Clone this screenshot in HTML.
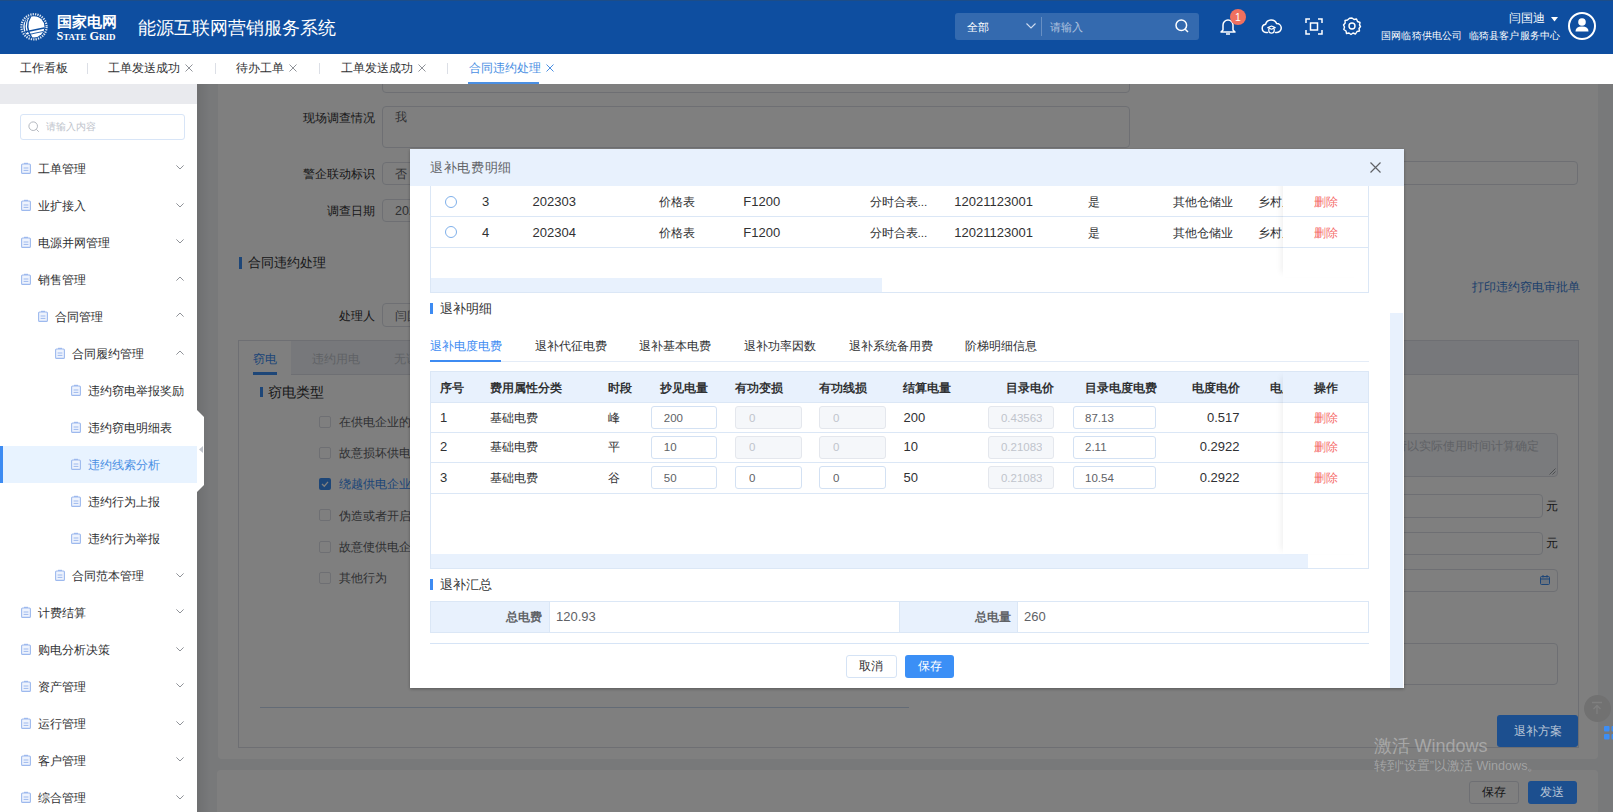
<!DOCTYPE html>
<html><head><meta charset="utf-8">
<style>
*{box-sizing:border-box;margin:0;padding:0}
html,body{width:1613px;height:812px;overflow:hidden;background:#f0f2f5;font-family:"Liberation Sans",sans-serif;color:#303133}
.a{position:absolute}
.t{position:absolute;white-space:nowrap;height:20px;line-height:20px;font-size:11.76px}
svg{position:absolute;overflow:visible}
</style></head><body>

<!-- ============ MAIN BACKGROUND (under overlay) ============ -->
<div id="main" class="a" style="left:197px;top:84px;width:1416px;height:728px;background:#f0f2f5;overflow:hidden">
<div class="a" style="left:0.0px;top:0.0px;width:13.0px;height:728.0px;background:linear-gradient(to right,rgba(0,0,0,0.08),rgba(0,0,0,0))"></div>
<div class="a" style="left:21.0px;top:-24.0px;width:1379.5px;height:698.5px;background:#fff;border-radius:4px"></div>
<div class="a" style="left:20.0px;top:685.5px;width:1380.5px;height:60.5px;background:#fff;border-radius:4px"></div>
<div class="a" style="left:185.0px;top:-24.0px;width:748.0px;height:32.5px;border:1px solid #dcdfe6;border-radius:4px;background:#fff"></div>
<div class="t" style="right:1238.2px;top:23.9px;color:#303133">现场调查情况</div>
<div class="a" style="left:185.0px;top:22.0px;width:748.0px;height:41.5px;border:1px solid #dcdfe6;border-radius:4px;background:#fff"></div>
<div class="t" style="left:198.0px;top:23.2px;color:#606266">我</div>
<div class="t" style="right:1238.2px;top:79.5px;color:#303133">警企联动标识</div>
<div class="a" style="left:185.0px;top:78.0px;width:618.0px;height:22.5px;border:1px solid #dcdfe6;border-radius:4px;background:#fff"></div>
<div class="t" style="left:198.0px;top:79.5px;color:#606266">否</div>
<div class="a" style="left:903.0px;top:77.0px;width:477.5px;height:23.5px;border:1px solid #dcdfe6;border-radius:4px;background:#fff"></div>
<div class="t" style="right:1238.2px;top:116.8px;color:#303133">调查日期</div>
<div class="a" style="left:185.0px;top:115.0px;width:618.0px;height:22.5px;border:1px solid #dcdfe6;border-radius:4px;background:#fff"></div>
<div class="t" style="left:198.0px;top:116.8px;color:#606266;font-size:12.5px">2023-03-17</div>
<div class="a" style="left:42.0px;top:173.0px;width:3.0px;height:11.5px;background:#3a8cf0"></div>
<div class="t" style="left:51.0px;top:168.8px;font-size:13.44px;color:#303133">合同违约处理</div>
<div class="t" style="right:1238.5px;top:221.6px;color:#303133">处理人</div>
<div class="a" style="left:185.0px;top:219.0px;width:618.0px;height:23.5px;border:1px solid #dcdfe6;border-radius:4px;background:#fff"></div>
<div class="t" style="left:198.0px;top:221.6px;color:#606266">闫国迪</div>
<div class="t" style="left:1274.6px;top:192.8px;color:#3a7fd8">打印违约窃电审批单</div>
<div class="a" style="left:41.0px;top:256.0px;width:1341.0px;height:407.5px;border:1px solid #dcdfe6;background:#fff"></div>
<div class="a" style="left:42.0px;top:257.0px;width:1339.0px;height:33.5px;background:#eef1f6;border-bottom:1px solid #dcdfe6"></div>
<div class="a" style="left:42.0px;top:257.0px;width:51.5px;height:34.0px;background:#fff"></div>
<div class="t" style="left:56.0px;top:264.7px;color:#3a8cf0">窃电</div>
<div class="a" style="left:56.0px;top:288.0px;width:24.0px;height:2.5px;background:#3a8cf0"></div>
<div class="t" style="left:115.0px;top:264.7px;color:#c0c4cc">违约用电</div>
<div class="t" style="left:197.3px;top:264.7px;color:#c0c4cc">无证用电</div>
<div class="a" style="left:63.0px;top:302.6px;width:3.0px;height:10.9px;background:#3a8cf0"></div>
<div class="t" style="left:71.0px;top:298.2px;font-size:14px;color:#303133">窃电类型</div>
<div class="a" style="left:121.5px;top:332.0px;width:12.0px;height:12.0px;border:1px solid #dcdfe6;border-radius:2px;background:#fff"></div>
<div class="t" style="left:141.6px;top:328.2px;color:#606266">在供电企业的供电设施上擅自接线用电</div>
<div class="a" style="left:121.5px;top:363.0px;width:12.0px;height:12.0px;border:1px solid #dcdfe6;border-radius:2px;background:#fff"></div>
<div class="t" style="left:141.6px;top:359.2px;color:#606266">故意损坏供电企业用电计量装置</div>
<div class="a" style="left:121.5px;top:394.2px;width:12.0px;height:12.0px;background:#3a8cf0;border-radius:2px"></div>
<svg style="left:123.5px;top:396.2px" width="8" height="8" viewBox="0 0 8 8"><path d="M1 4 L3.3 6.2 L7 1.8" stroke="#fff" stroke-width="1.3" fill="none"/></svg>
<div class="t" style="left:141.6px;top:390.4px;color:#3a8cf0">绕越供电企业用电计量装置用电</div>
<div class="a" style="left:121.5px;top:425.3px;width:12.0px;height:12.0px;border:1px solid #dcdfe6;border-radius:2px;background:#fff"></div>
<div class="t" style="left:141.6px;top:421.5px;color:#606266">伪造或者开启供电企业加封的用电计量装置封印用电</div>
<div class="a" style="left:121.5px;top:457.0px;width:12.0px;height:12.0px;border:1px solid #dcdfe6;border-radius:2px;background:#fff"></div>
<div class="t" style="left:141.6px;top:453.2px;color:#606266">故意使供电企业用电计量装置不准或者失效</div>
<div class="a" style="left:121.5px;top:487.8px;width:12.0px;height:12.0px;border:1px solid #dcdfe6;border-radius:2px;background:#fff"></div>
<div class="t" style="left:141.6px;top:484.0px;color:#606266">其他行为</div>
<div class="a" style="left:1103.0px;top:348.5px;width:257.5px;height:44.0px;border:1px solid #dcdfe6;border-radius:4px;background:#fff;background:#f5f7fa"></div>
<div class="t" style="left:1197.5px;top:352.2px;color:#c0c4cc">请以实际使用时间计算确定</div>
<svg style="left:1352px;top:384px" width="7" height="7" viewBox="0 0 7 7"><path d="M6.5 0.5 L0.5 6.5 M6.5 3.5 L3.5 6.5" stroke="#909399" stroke-width="0.9"/></svg>
<div class="a" style="left:1103.0px;top:410.0px;width:243.0px;height:23.5px;border:1px solid #dcdfe6;border-radius:4px;background:#fff"></div>
<div class="t" style="left:1349.0px;top:412.2px;color:#303133">元</div>
<div class="a" style="left:1103.0px;top:447.5px;width:243.0px;height:23.0px;border:1px solid #dcdfe6;border-radius:4px;background:#fff"></div>
<div class="t" style="left:1349.0px;top:449.2px;color:#303133">元</div>
<div class="a" style="left:1103.0px;top:484.5px;width:257.5px;height:23.5px;border:1px solid #dcdfe6;border-radius:4px;background:#fff"></div>
<svg style="left:1343px;top:491px" width="10" height="10" viewBox="0 0 10 10"><rect x="0.5" y="1.5" width="9" height="8" rx="1" stroke="#3a8cf0" stroke-width="1" fill="#dbe8fa"/><path d="M0.5 4 H9.5 M3 0 V2.5 M7 0 V2.5" stroke="#3a8cf0" stroke-width="1"/></svg>
<div class="a" style="left:1103.0px;top:558.5px;width:257.5px;height:42.0px;border:1px solid #dcdfe6;border-radius:4px;background:#fff"></div>
<div class="a" style="left:63.0px;top:623.0px;width:649.0px;height:1.2px;background:#c7d7ec"></div>
<div class="a" style="left:1272.0px;top:696.5px;width:49.5px;height:23.0px;border:1px solid #dcdfe6;border-radius:3px;background:#fff"></div>
<div class="t" style="left:1285.0px;top:698.2px;color:#303133">保存</div>
<div class="a" style="left:1386.5px;top:610.5px;width:27px;height:27px;border-radius:50%;background:#e2e2e2"></div>
<svg style="left:1393px;top:617px" width="14" height="14" viewBox="0 0 14 14"><path d="M2 1.5 H12 M7 13 V4.5 M3.5 8 L7 4.5 L10.5 8" stroke="#fff" stroke-width="1.3" fill="none"/></svg>
</div>

<!-- overlay -->
<div class="a" style="left:197px;top:84px;width:1416px;height:728px;background:rgba(0,0,0,0.5)"></div>

<!-- ============ HEADER ============ -->
<div id="hdr" class="a" style="left:0;top:0;width:1613px;height:54px;background:#0e4ea0">
 <div class="a" style="left:0;top:0;width:1613px;height:1px;background:#1d4d88"></div>
 <svg style="left:20px;top:13px" width="28" height="28" viewBox="0 0 28 28">
  <circle cx="14" cy="13.8" r="12.6" fill="none" stroke="rgba(255,255,255,0.85)" stroke-width="2.2" stroke-dasharray="1.3 1.1"/>
  <circle cx="13.9" cy="13.8" r="10.6" fill="#fff"/>
  <path d="M10.5 3.6 Q4.5 13 11.5 24.4" stroke="#0f4fa1" stroke-width="1.5" fill="none"/>
  <path d="M7.2 6 Q3.5 12 6.5 20" stroke="#0f4fa1" stroke-width="1.1" fill="none"/>
  <path d="M5 19 Q14 17 24.2 15" stroke="#0f4fa1" stroke-width="1.3" fill="none"/>
  <path d="M7 22 Q15 20 23 18.5" stroke="#0f4fa1" stroke-width="0.9" fill="none"/>
 </svg>
 <div class="t" style="left:57px;top:12px;font-size:15px;font-weight:bold;color:#fff;letter-spacing:0px">国家电网</div>
 <div class="t" style="left:56.5px;top:25.5px;font-size:12.2px;font-family:'Liberation Serif',serif;font-weight:bold;color:#fff;font-variant:small-caps;letter-spacing:0px">State Grid</div>
 <div class="t" style="left:137.5px;top:17.5px;font-size:18px;color:#fff">能源互联网营销服务系统</div>
 <div class="a" style="left:955px;top:13px;width:244px;height:27px;background:rgba(255,255,255,0.16);border-radius:3px"></div>
 <div class="t" style="left:967px;top:16.5px;font-size:10.9px;color:#fff">全部</div>
 <svg style="left:1026px;top:23px" width="10" height="6" viewBox="0 0 10 6"><path d="M0.5 0.5 L5 5 L9.5 0.5" stroke="#cfdcf0" stroke-width="1.1" fill="none"/></svg>
 <div class="a" style="left:1041px;top:17px;width:1px;height:19px;background:rgba(255,255,255,0.25)"></div>
 <div class="t" style="left:1050px;top:16.5px;font-size:10.9px;color:rgba(255,255,255,0.6)">请输入</div>
 <svg style="left:1175px;top:19px" width="14" height="14" viewBox="0 0 14 14"><circle cx="6.3" cy="6.3" r="5.3" stroke="#fff" stroke-width="1.5" fill="none"/><path d="M10.2 10.2 L13 13" stroke="#fff" stroke-width="1.5"/></svg>
 <!-- bell -->
 <svg style="left:1220px;top:17px" width="16" height="19" viewBox="0 0 16 19"><path d="M3 13 V8 A5 5 0 0 1 13 8 V13 L15 15 H1 Z" stroke="#fff" stroke-width="1.5" fill="none" stroke-linejoin="round"/><path d="M6 17 H10" stroke="#fff" stroke-width="1.5"/></svg>
 <div class="a" style="left:1229.8px;top:9.4px;width:16px;height:16px;border-radius:50%;background:#f0705f;color:#fff;font-size:10.5px;line-height:16px;text-align:center">1</div>
 <!-- cloud -->
 <svg style="left:1261px;top:18.5px" width="21" height="15" viewBox="0 0 21 15"><path d="M6.5 13.5 H5 A4.2 4.2 0 0 1 4.6 5.2 A5.8 5.8 0 0 1 15.6 4.6 A4.4 4.4 0 0 1 16 13.5 H14.5" stroke="#fff" stroke-width="1.5" fill="none" stroke-linecap="round"/><path d="M6.8 8.6 L10.5 7 L14.2 8.6 L10.5 10.2 Z" stroke="#fff" stroke-width="1.2" fill="none" stroke-linejoin="round"/><path d="M7.8 10 V11.5 A2.7 2.7 0 0 0 13.2 11.5 V10" stroke="#fff" stroke-width="1.2" fill="none"/></svg>
 <!-- scan -->
 <svg style="left:1305px;top:18px" width="18" height="17" viewBox="0 0 18 17"><path d="M1 5 V1 H5 M13 1 H17 V5 M17 12 V16 H13 M5 16 H1 V12" stroke="#fff" stroke-width="1.5" fill="none"/><rect x="5.5" y="5" width="7" height="7" stroke="#fff" stroke-width="1.5" fill="none"/></svg>
 <!-- gear -->
 <svg style="left:1343px;top:17px" width="18" height="18" viewBox="0 0 18 18"><path d="M9 1 L11 2.5 L13.5 2 L14.5 4.5 L17 5.5 L16.5 8 L17.5 9.5 L16 11.5 L16.5 14 L14 14.5 L12.5 17 L10 16 L8 17.5 L6 16 L3.5 16.5 L3 14 L0.8 12.5 L1.5 10 L0.5 8 L2.2 6 L2 3.5 L4.5 3 L6.5 1.2 Z" stroke="#fff" stroke-width="1.4" fill="none" stroke-linejoin="round"/><circle cx="9" cy="9" r="3" stroke="#fff" stroke-width="1.4" fill="none"/></svg>
 <div class="t" style="left:1509px;top:8px;font-size:11.76px;color:#fff">闫国迪</div>
 <svg style="left:1550.5px;top:16.5px" width="7" height="4.5" viewBox="0 0 7 4.5"><path d="M0 0 H7 L3.5 4.5 Z" fill="#fff"/></svg>
 <div class="t" style="left:1381px;top:26px;font-size:10.08px;letter-spacing:0.2px;color:#fff">国网临猗供电公司&nbsp; 临猗县客户服务中心</div>
 <div class="a" style="left:1568px;top:12px;width:28px;height:28px;border-radius:50%;border:2px solid #fff"></div>
 <svg style="left:1574px;top:17px" width="16" height="17" viewBox="0 0 16 17"><circle cx="8" cy="5" r="3.8" fill="#fff"/><path d="M1.5 14.5 Q1.5 9.5 8 9.5 Q14.5 9.5 14.5 14.5 Z" fill="#fff"/></svg>
</div>

<!-- ============ TABS ============ -->
<div id="tabs" class="a" style="left:0;top:54px;width:1613px;height:30px;background:#fff">
 <div class="t" style="left:19.5px;top:4.2px">工作看板</div>
 <div class="a" style="left:87px;top:9px;width:1px;height:11px;background:#dcdfe6"></div>
 <div class="t" style="left:108px;top:4.2px">工单发送成功</div>
 <svg style="left:185.0px;top:10px" width="8" height="8" viewBox="0 0 8 8"><path d="M0.5 0.5 L7.5 7.5 M7.5 0.5 L0.5 7.5" stroke="#909399" stroke-width="1"/></svg>
 <div class="a" style="left:215px;top:9px;width:1px;height:11px;background:#dcdfe6"></div>
 <div class="t" style="left:236px;top:4.2px">待办工单</div>
 <svg style="left:289.0px;top:10px" width="8" height="8" viewBox="0 0 8 8"><path d="M0.5 0.5 L7.5 7.5 M7.5 0.5 L0.5 7.5" stroke="#909399" stroke-width="1"/></svg>
 <div class="a" style="left:319px;top:9px;width:1px;height:11px;background:#dcdfe6"></div>
 <div class="t" style="left:340.5px;top:4.2px">工单发送成功</div>
 <svg style="left:417.5px;top:10px" width="8" height="8" viewBox="0 0 8 8"><path d="M0.5 0.5 L7.5 7.5 M7.5 0.5 L0.5 7.5" stroke="#909399" stroke-width="1"/></svg>
 <div class="a" style="left:447px;top:9px;width:1px;height:11px;background:#dcdfe6"></div>
 <div class="t" style="left:468.5px;top:4.2px;color:#4a8fe3">合同违约处理</div>
 <svg style="left:546.0px;top:10px" width="8" height="8" viewBox="0 0 8 8"><path d="M0.5 0.5 L7.5 7.5 M7.5 0.5 L0.5 7.5" stroke="#4a8fe3" stroke-width="1"/></svg>
 <div class="a" style="left:468px;top:28px;width:71px;height:2px;background:#4a8fe3"></div>
</div>

<!-- ============ SIDEBAR ============ -->
<div id="side" class="a" style="left:0;top:84px;width:197px;height:728px;background:#fff">
<div class="a" style="left:0;top:0;width:197px;height:20px;background:#e9eaee"></div>
<div class="a" style="left:19.5px;top:30px;width:165px;height:25.5px;border:1px solid #d8e5f7;border-radius:3px"></div>
<svg style="left:28px;top:37px" width="12" height="12" viewBox="0 0 12 12"><circle cx="5.2" cy="5.2" r="4.3" stroke="#b4b8bf" stroke-width="1" fill="none"/><path d="M8.3 8.3 L10.8 10.8" stroke="#b4b8bf" stroke-width="1"/></svg>
<div class="t" style="left:45.5px;top:33px;font-size:10.08px;color:#c0c4cc">请输入内容</div>
<svg style="left:21.0px;top:79.0px" width="10" height="11" viewBox="0 0 10 11"><rect x="0.6" y="1" width="8.8" height="9.4" rx="1" fill="#eef3fd" stroke="#9db9ee" stroke-width="1.1"/><path d="M3 0.4 H7" stroke="#9db9ee" stroke-width="1.2"/><path d="M2.6 5 H7.4 M2.6 7.4 H7.4" stroke="#9db9ee" stroke-width="1"/></svg>
<div class="t" style="left:38.0px;top:75.0px;color:#303133">工单管理</div>
<svg style="left:176px;top:81px" width="8" height="5" viewBox="0 0 8 5"><path d="M0.4 0.4 L4 4 L7.6 0.4" stroke="#909399" stroke-width="1" fill="none"/></svg>
<svg style="left:21.0px;top:116.0px" width="10" height="11" viewBox="0 0 10 11"><rect x="0.6" y="1" width="8.8" height="9.4" rx="1" fill="#eef3fd" stroke="#9db9ee" stroke-width="1.1"/><path d="M3 0.4 H7" stroke="#9db9ee" stroke-width="1.2"/><path d="M2.6 5 H7.4 M2.6 7.4 H7.4" stroke="#9db9ee" stroke-width="1"/></svg>
<div class="t" style="left:38.0px;top:112.0px;color:#303133">业扩接入</div>
<svg style="left:176px;top:119px" width="8" height="5" viewBox="0 0 8 5"><path d="M0.4 0.4 L4 4 L7.6 0.4" stroke="#909399" stroke-width="1" fill="none"/></svg>
<svg style="left:21.0px;top:153.0px" width="10" height="11" viewBox="0 0 10 11"><rect x="0.6" y="1" width="8.8" height="9.4" rx="1" fill="#eef3fd" stroke="#9db9ee" stroke-width="1.1"/><path d="M3 0.4 H7" stroke="#9db9ee" stroke-width="1.2"/><path d="M2.6 5 H7.4 M2.6 7.4 H7.4" stroke="#9db9ee" stroke-width="1"/></svg>
<div class="t" style="left:38.0px;top:149.0px;color:#303133">电源并网管理</div>
<svg style="left:176px;top:155px" width="8" height="5" viewBox="0 0 8 5"><path d="M0.4 0.4 L4 4 L7.6 0.4" stroke="#909399" stroke-width="1" fill="none"/></svg>
<svg style="left:21.0px;top:190.0px" width="10" height="11" viewBox="0 0 10 11"><rect x="0.6" y="1" width="8.8" height="9.4" rx="1" fill="#eef3fd" stroke="#9db9ee" stroke-width="1.1"/><path d="M3 0.4 H7" stroke="#9db9ee" stroke-width="1.2"/><path d="M2.6 5 H7.4 M2.6 7.4 H7.4" stroke="#9db9ee" stroke-width="1"/></svg>
<div class="t" style="left:38.0px;top:186.0px;color:#303133">销售管理</div>
<svg style="left:176px;top:192px" width="8" height="5" viewBox="0 0 8 5"><path d="M0.4 4.6 L4 1 L7.6 4.6" stroke="#909399" stroke-width="1" fill="none"/></svg>
<svg style="left:37.8px;top:227.0px" width="10" height="11" viewBox="0 0 10 11"><rect x="0.6" y="1" width="8.8" height="9.4" rx="1" fill="#eef3fd" stroke="#9db9ee" stroke-width="1.1"/><path d="M3 0.4 H7" stroke="#9db9ee" stroke-width="1.2"/><path d="M2.6 5 H7.4 M2.6 7.4 H7.4" stroke="#9db9ee" stroke-width="1"/></svg>
<div class="t" style="left:54.8px;top:223.0px;color:#303133">合同管理</div>
<svg style="left:176px;top:228px" width="8" height="5" viewBox="0 0 8 5"><path d="M0.4 4.6 L4 1 L7.6 4.6" stroke="#909399" stroke-width="1" fill="none"/></svg>
<svg style="left:54.6px;top:264.0px" width="10" height="11" viewBox="0 0 10 11"><rect x="0.6" y="1" width="8.8" height="9.4" rx="1" fill="#eef3fd" stroke="#9db9ee" stroke-width="1.1"/><path d="M3 0.4 H7" stroke="#9db9ee" stroke-width="1.2"/><path d="M2.6 5 H7.4 M2.6 7.4 H7.4" stroke="#9db9ee" stroke-width="1"/></svg>
<div class="t" style="left:71.6px;top:260.0px;color:#303133">合同履约管理</div>
<svg style="left:176px;top:266px" width="8" height="5" viewBox="0 0 8 5"><path d="M0.4 4.6 L4 1 L7.6 4.6" stroke="#909399" stroke-width="1" fill="none"/></svg>
<svg style="left:71.4px;top:301.0px" width="10" height="11" viewBox="0 0 10 11"><rect x="0.6" y="1" width="8.8" height="9.4" rx="1" fill="#eef3fd" stroke="#9db9ee" stroke-width="1.1"/><path d="M3 0.4 H7" stroke="#9db9ee" stroke-width="1.2"/><path d="M2.6 5 H7.4 M2.6 7.4 H7.4" stroke="#9db9ee" stroke-width="1"/></svg>
<div class="t" style="left:88.4px;top:297.0px;color:#303133">违约窃电举报奖励</div>
<svg style="left:71.4px;top:338.0px" width="10" height="11" viewBox="0 0 10 11"><rect x="0.6" y="1" width="8.8" height="9.4" rx="1" fill="#eef3fd" stroke="#9db9ee" stroke-width="1.1"/><path d="M3 0.4 H7" stroke="#9db9ee" stroke-width="1.2"/><path d="M2.6 5 H7.4 M2.6 7.4 H7.4" stroke="#9db9ee" stroke-width="1"/></svg>
<div class="t" style="left:88.4px;top:334.0px;color:#303133">违约窃电明细表</div>
<div class="a" style="left:0;top:362px;width:197px;height:37px;background:#e8f3ff"></div>
<div class="a" style="left:0;top:362px;width:3px;height:37px;background:#3d8bf2"></div>
<svg style="left:71.4px;top:375.0px" width="10" height="11" viewBox="0 0 10 11"><rect x="0.6" y="1" width="8.8" height="9.4" rx="1" fill="#eef3fd" stroke="#9db9ee" stroke-width="1.1"/><path d="M3 0.4 H7" stroke="#9db9ee" stroke-width="1.2"/><path d="M2.6 5 H7.4 M2.6 7.4 H7.4" stroke="#9db9ee" stroke-width="1"/></svg>
<div class="t" style="left:88.4px;top:371.0px;color:#4a8fe3">违约线索分析</div>
<svg style="left:71.4px;top:412.0px" width="10" height="11" viewBox="0 0 10 11"><rect x="0.6" y="1" width="8.8" height="9.4" rx="1" fill="#eef3fd" stroke="#9db9ee" stroke-width="1.1"/><path d="M3 0.4 H7" stroke="#9db9ee" stroke-width="1.2"/><path d="M2.6 5 H7.4 M2.6 7.4 H7.4" stroke="#9db9ee" stroke-width="1"/></svg>
<div class="t" style="left:88.4px;top:408.0px;color:#303133">违约行为上报</div>
<svg style="left:71.4px;top:449.0px" width="10" height="11" viewBox="0 0 10 11"><rect x="0.6" y="1" width="8.8" height="9.4" rx="1" fill="#eef3fd" stroke="#9db9ee" stroke-width="1.1"/><path d="M3 0.4 H7" stroke="#9db9ee" stroke-width="1.2"/><path d="M2.6 5 H7.4 M2.6 7.4 H7.4" stroke="#9db9ee" stroke-width="1"/></svg>
<div class="t" style="left:88.4px;top:445.0px;color:#303133">违约行为举报</div>
<svg style="left:54.6px;top:486.0px" width="10" height="11" viewBox="0 0 10 11"><rect x="0.6" y="1" width="8.8" height="9.4" rx="1" fill="#eef3fd" stroke="#9db9ee" stroke-width="1.1"/><path d="M3 0.4 H7" stroke="#9db9ee" stroke-width="1.2"/><path d="M2.6 5 H7.4 M2.6 7.4 H7.4" stroke="#9db9ee" stroke-width="1"/></svg>
<div class="t" style="left:71.6px;top:482.0px;color:#303133">合同范本管理</div>
<svg style="left:176px;top:489px" width="8" height="5" viewBox="0 0 8 5"><path d="M0.4 0.4 L4 4 L7.6 0.4" stroke="#909399" stroke-width="1" fill="none"/></svg>
<svg style="left:21.0px;top:523.0px" width="10" height="11" viewBox="0 0 10 11"><rect x="0.6" y="1" width="8.8" height="9.4" rx="1" fill="#eef3fd" stroke="#9db9ee" stroke-width="1.1"/><path d="M3 0.4 H7" stroke="#9db9ee" stroke-width="1.2"/><path d="M2.6 5 H7.4 M2.6 7.4 H7.4" stroke="#9db9ee" stroke-width="1"/></svg>
<div class="t" style="left:38.0px;top:519.0px;color:#303133">计费结算</div>
<svg style="left:176px;top:525px" width="8" height="5" viewBox="0 0 8 5"><path d="M0.4 0.4 L4 4 L7.6 0.4" stroke="#909399" stroke-width="1" fill="none"/></svg>
<svg style="left:21.0px;top:560.0px" width="10" height="11" viewBox="0 0 10 11"><rect x="0.6" y="1" width="8.8" height="9.4" rx="1" fill="#eef3fd" stroke="#9db9ee" stroke-width="1.1"/><path d="M3 0.4 H7" stroke="#9db9ee" stroke-width="1.2"/><path d="M2.6 5 H7.4 M2.6 7.4 H7.4" stroke="#9db9ee" stroke-width="1"/></svg>
<div class="t" style="left:38.0px;top:556.0px;color:#303133">购电分析决策</div>
<svg style="left:176px;top:563px" width="8" height="5" viewBox="0 0 8 5"><path d="M0.4 0.4 L4 4 L7.6 0.4" stroke="#909399" stroke-width="1" fill="none"/></svg>
<svg style="left:21.0px;top:597.0px" width="10" height="11" viewBox="0 0 10 11"><rect x="0.6" y="1" width="8.8" height="9.4" rx="1" fill="#eef3fd" stroke="#9db9ee" stroke-width="1.1"/><path d="M3 0.4 H7" stroke="#9db9ee" stroke-width="1.2"/><path d="M2.6 5 H7.4 M2.6 7.4 H7.4" stroke="#9db9ee" stroke-width="1"/></svg>
<div class="t" style="left:38.0px;top:593.0px;color:#303133">资产管理</div>
<svg style="left:176px;top:599px" width="8" height="5" viewBox="0 0 8 5"><path d="M0.4 0.4 L4 4 L7.6 0.4" stroke="#909399" stroke-width="1" fill="none"/></svg>
<svg style="left:21.0px;top:634.0px" width="10" height="11" viewBox="0 0 10 11"><rect x="0.6" y="1" width="8.8" height="9.4" rx="1" fill="#eef3fd" stroke="#9db9ee" stroke-width="1.1"/><path d="M3 0.4 H7" stroke="#9db9ee" stroke-width="1.2"/><path d="M2.6 5 H7.4 M2.6 7.4 H7.4" stroke="#9db9ee" stroke-width="1"/></svg>
<div class="t" style="left:38.0px;top:630.0px;color:#303133">运行管理</div>
<svg style="left:176px;top:637px" width="8" height="5" viewBox="0 0 8 5"><path d="M0.4 0.4 L4 4 L7.6 0.4" stroke="#909399" stroke-width="1" fill="none"/></svg>
<svg style="left:21.0px;top:671.0px" width="10" height="11" viewBox="0 0 10 11"><rect x="0.6" y="1" width="8.8" height="9.4" rx="1" fill="#eef3fd" stroke="#9db9ee" stroke-width="1.1"/><path d="M3 0.4 H7" stroke="#9db9ee" stroke-width="1.2"/><path d="M2.6 5 H7.4 M2.6 7.4 H7.4" stroke="#9db9ee" stroke-width="1"/></svg>
<div class="t" style="left:38.0px;top:667.0px;color:#303133">客户管理</div>
<svg style="left:176px;top:673px" width="8" height="5" viewBox="0 0 8 5"><path d="M0.4 0.4 L4 4 L7.6 0.4" stroke="#909399" stroke-width="1" fill="none"/></svg>
<svg style="left:21.0px;top:708.0px" width="10" height="11" viewBox="0 0 10 11"><rect x="0.6" y="1" width="8.8" height="9.4" rx="1" fill="#eef3fd" stroke="#9db9ee" stroke-width="1.1"/><path d="M3 0.4 H7" stroke="#9db9ee" stroke-width="1.2"/><path d="M2.6 5 H7.4 M2.6 7.4 H7.4" stroke="#9db9ee" stroke-width="1"/></svg>
<div class="t" style="left:38.0px;top:704.0px;color:#303133">综合管理</div>
<svg style="left:176px;top:711px" width="8" height="5" viewBox="0 0 8 5"><path d="M0.4 0.4 L4 4 L7.6 0.4" stroke="#909399" stroke-width="1" fill="none"/></svg>
<svg style="left:197px;top:326px" width="8" height="82" viewBox="0 0 8 82"><path d="M0 0 L7 7 V75 L0 82 Z" fill="#fff"/><path d="M6 36 L2 39.5 L6 43 Z" fill="#c0c4cc"/></svg>
</div>

<!-- ============ MODAL ============ -->
<div id="modal" class="a" style="left:410px;top:149px;width:994px;height:539px;background:#fff;overflow:hidden;box-shadow:0 1px 3px rgba(0,0,0,0.3)">
<div class="a" style="left:20.0px;top:21.0px;width:939.0px;height:122.5px;border:1px solid #dbe7f6;border-top:none;background:#fff"></div>
<div class="a" style="left:21.0px;top:66.5px;width:937.0px;height:1.0px;background:#dbe7f6"></div>
<div class="a" style="left:21.0px;top:97.7px;width:937.0px;height:1.0px;background:#dbe7f6"></div>
<div class="a" style="left:21.0px;top:128.8px;width:451.0px;height:14.2px;background:#e8f1fd"></div>
<div class="a" style="left:35px;top:47.0px;width:12px;height:12px;border-radius:50%;border:1px solid #7fb0ea;background:#fff"></div>
<div class="t" style="left:72.0px;top:43.3px;font-size:13px;color:#303133">3</div>
<div class="t" style="left:122.6px;top:43.3px;font-size:13px;color:#303133">202303</div>
<div class="t" style="left:249.0px;top:43.3px;color:#303133">价格表</div>
<div class="t" style="left:333.3px;top:43.3px;font-size:13px;color:#303133">F1200</div>
<div class="t" style="left:459.5px;top:43.3px;color:#303133">分时合表...</div>
<div class="t" style="left:544.3px;top:43.3px;font-size:13px;color:#303133">12021123001</div>
<div class="t" style="left:678.4px;top:43.3px;color:#303133">是</div>
<div class="t" style="left:762.8px;top:43.3px;color:#303133">其他仓储业</div>
<div class="t" style="left:847.6px;top:43.3px;color:#303133">乡村居民生活用电</div>
<div class="a" style="left:35px;top:77.2px;width:12px;height:12px;border-radius:50%;border:1px solid #7fb0ea;background:#fff"></div>
<div class="t" style="left:72.0px;top:73.5px;font-size:13px;color:#303133">4</div>
<div class="t" style="left:122.6px;top:73.5px;font-size:13px;color:#303133">202304</div>
<div class="t" style="left:249.0px;top:73.5px;color:#303133">价格表</div>
<div class="t" style="left:333.3px;top:73.5px;font-size:13px;color:#303133">F1200</div>
<div class="t" style="left:459.5px;top:73.5px;color:#303133">分时合表...</div>
<div class="t" style="left:544.3px;top:73.5px;font-size:13px;color:#303133">12021123001</div>
<div class="t" style="left:678.4px;top:73.5px;color:#303133">是</div>
<div class="t" style="left:762.8px;top:73.5px;color:#303133">其他仓储业</div>
<div class="t" style="left:847.6px;top:73.5px;color:#303133">乡村居民生活用电</div>
<div class="a" style="left:873.0px;top:21.0px;width:85.0px;height:107.0px;background:#fff;box-shadow:-6px 0 6px -4px rgba(0,0,0,0.06)"></div>
<div class="a" style="left:873.0px;top:66.5px;width:85.0px;height:1.0px;background:#dbe7f6"></div>
<div class="a" style="left:873.0px;top:97.7px;width:85.0px;height:1.0px;background:#dbe7f6"></div>
<div class="t" style="left:903.5px;top:43.3px;color:#f56c6c">删除</div>
<div class="t" style="left:903.5px;top:73.5px;color:#f56c6c">删除</div>
<div class="a" style="left:0.0px;top:0.0px;width:994.0px;height:37.0px;background:#e8f1fd"></div>
<div class="t" style="left:20.0px;top:9.0px;font-size:13.44px;color:#606266;letter-spacing:0.7px">退补电费明细</div>
<svg style="left:959.5px;top:12.5px" width="11" height="11" viewBox="0 0 11 11"><path d="M0.5 0.5 L10.5 10.5 M10.5 0.5 L0.5 10.5" stroke="#606266" stroke-width="1.2"/></svg>
<div class="a" style="left:20.3px;top:154.0px;width:2.9px;height:11.0px;background:#3d8bf2"></div>
<div class="t" style="left:29.7px;top:149.9px;font-size:13.44px;color:#303133">退补明细</div>
<div class="a" style="left:20.0px;top:212.0px;width:939.0px;height:1.0px;background:#e4ecf7"></div>
<div class="t" style="left:20.0px;top:186.8px;color:#3d8bf2">退补电度电费</div>
<div class="t" style="left:125.0px;top:186.8px;color:#303133">退补代征电费</div>
<div class="t" style="left:229.2px;top:186.8px;color:#303133">退补基本电费</div>
<div class="t" style="left:334.0px;top:186.8px;color:#303133">退补功率因数</div>
<div class="t" style="left:438.7px;top:186.8px;color:#303133">退补系统备用费</div>
<div class="t" style="left:554.7px;top:186.8px;color:#303133">阶梯明细信息</div>
<div class="a" style="left:20.0px;top:211.0px;width:71.0px;height:2.0px;background:#3d8bf2"></div>
<div class="a" style="left:20.0px;top:222.0px;width:939.0px;height:198.0px;border:1px solid #dbe7f6;background:#fff"></div>
<div class="a" style="left:21.0px;top:223.0px;width:937.0px;height:30.5px;background:#e8f1fd"></div>
<div class="a" style="left:21.0px;top:253.0px;width:937.0px;height:1.0px;background:#dbe7f6"></div>
<div class="a" style="left:21.0px;top:283.2px;width:937.0px;height:1.0px;background:#dbe7f6"></div>
<div class="a" style="left:21.0px;top:312.9px;width:937.0px;height:1.0px;background:#dbe7f6"></div>
<div class="a" style="left:21.0px;top:343.7px;width:937.0px;height:1.0px;background:#dbe7f6"></div>
<div class="t" style="left:29.7px;top:228.9px;font-weight:bold;color:#303133">序号</div>
<div class="t" style="left:80.2px;top:228.9px;font-weight:bold;color:#303133">费用属性分类</div>
<div class="t" style="left:198.4px;top:228.9px;font-weight:bold;color:#303133">时段</div>
<div class="t" style="left:249.9px;top:228.9px;font-weight:bold;color:#303133">抄见电量</div>
<div class="t" style="left:324.8px;top:228.9px;font-weight:bold;color:#303133">有功变损</div>
<div class="t" style="left:409.0px;top:228.9px;font-weight:bold;color:#303133">有功线损</div>
<div class="t" style="left:493.2px;top:228.9px;font-weight:bold;color:#303133">结算电量</div>
<div class="t" style="left:675.0px;top:228.9px;font-weight:bold;color:#303133">目录电度电费</div>
<div class="t" style="left:860.3px;top:228.9px;font-weight:bold;color:#303133">电度电费</div>
<div class="t" style="right:350.5px;top:228.9px;font-weight:bold;color:#303133">目录电价</div>
<div class="t" style="right:164.5px;top:228.9px;font-weight:bold;color:#303133">电度电价</div>
<div class="t" style="left:30.0px;top:258.5px;font-size:13px;color:#303133">1</div>
<div class="t" style="left:80.2px;top:258.5px;color:#303133">基础电费</div>
<div class="t" style="left:198.4px;top:258.5px;color:#303133">峰</div>
<div class="a" style="left:240.6px;top:256.7px;width:66.9px;height:23.0px;border:1px solid #d3e1f3;border-radius:3px;background:#fff"></div>
<div class="t" style="left:253.8px;top:258.5px;width:49.7px;overflow:hidden;font-size:11.5px;color:#606266">200</div>
<div class="a" style="left:325.0px;top:256.7px;width:66.8px;height:23.0px;border:1px solid #e4e7ed;border-radius:3px;background:#f5f7fa"></div>
<div class="t" style="left:339.0px;top:258.5px;width:48.8px;overflow:hidden;font-size:11.5px;color:#c0c4cc">0</div>
<div class="a" style="left:409.0px;top:256.7px;width:67.0px;height:23.0px;border:1px solid #e4e7ed;border-radius:3px;background:#f5f7fa"></div>
<div class="t" style="left:423.0px;top:258.5px;width:49.0px;overflow:hidden;font-size:11.5px;color:#c0c4cc">0</div>
<div class="t" style="left:493.5px;top:258.5px;font-size:13px;color:#303133">200</div>
<div class="a" style="left:577.5px;top:256.7px;width:66.9px;height:23.0px;border:1px solid #e4e7ed;border-radius:3px;background:#f5f7fa"></div>
<div class="t" style="left:590.9px;top:258.5px;width:41.5px;overflow:hidden;font-size:11.5px;color:#c0c4cc">0.43563187</div>
<div class="a" style="left:662.5px;top:256.7px;width:83.1px;height:23.0px;border:1px solid #d3e1f3;border-radius:3px;background:#fff"></div>
<div class="t" style="left:675.0px;top:258.5px;width:66.6px;overflow:hidden;font-size:11.5px;color:#606266">87.13</div>
<div class="t" style="right:164.5px;top:258.5px;font-size:13px;color:#303133">0.517</div>
<div class="t" style="left:30.0px;top:288.3px;font-size:13px;color:#303133">2</div>
<div class="t" style="left:80.2px;top:288.3px;color:#303133">基础电费</div>
<div class="t" style="left:198.4px;top:288.3px;color:#303133">平</div>
<div class="a" style="left:240.6px;top:286.5px;width:66.9px;height:23.0px;border:1px solid #d3e1f3;border-radius:3px;background:#fff"></div>
<div class="t" style="left:253.8px;top:288.3px;width:49.7px;overflow:hidden;font-size:11.5px;color:#606266">10</div>
<div class="a" style="left:325.0px;top:286.5px;width:66.8px;height:23.0px;border:1px solid #e4e7ed;border-radius:3px;background:#f5f7fa"></div>
<div class="t" style="left:339.0px;top:288.3px;width:48.8px;overflow:hidden;font-size:11.5px;color:#c0c4cc">0</div>
<div class="a" style="left:409.0px;top:286.5px;width:67.0px;height:23.0px;border:1px solid #e4e7ed;border-radius:3px;background:#f5f7fa"></div>
<div class="t" style="left:423.0px;top:288.3px;width:49.0px;overflow:hidden;font-size:11.5px;color:#c0c4cc">0</div>
<div class="t" style="left:493.5px;top:288.3px;font-size:13px;color:#303133">10</div>
<div class="a" style="left:577.5px;top:286.5px;width:66.9px;height:23.0px;border:1px solid #e4e7ed;border-radius:3px;background:#f5f7fa"></div>
<div class="t" style="left:590.9px;top:288.3px;width:41.5px;overflow:hidden;font-size:11.5px;color:#c0c4cc">0.21083187</div>
<div class="a" style="left:662.5px;top:286.5px;width:83.1px;height:23.0px;border:1px solid #d3e1f3;border-radius:3px;background:#fff"></div>
<div class="t" style="left:675.0px;top:288.3px;width:66.6px;overflow:hidden;font-size:11.5px;color:#606266">2.11</div>
<div class="t" style="right:164.5px;top:288.3px;font-size:13px;color:#303133">0.2922</div>
<div class="t" style="left:30.0px;top:318.9px;font-size:13px;color:#303133">3</div>
<div class="t" style="left:80.2px;top:318.9px;color:#303133">基础电费</div>
<div class="t" style="left:198.4px;top:318.9px;color:#303133">谷</div>
<div class="a" style="left:240.6px;top:317.1px;width:66.9px;height:23.0px;border:1px solid #d3e1f3;border-radius:3px;background:#fff"></div>
<div class="t" style="left:253.8px;top:318.9px;width:49.7px;overflow:hidden;font-size:11.5px;color:#606266">50</div>
<div class="a" style="left:325.0px;top:317.1px;width:66.8px;height:23.0px;border:1px solid #d3e1f3;border-radius:3px;background:#fff"></div>
<div class="t" style="left:339.0px;top:318.9px;width:48.8px;overflow:hidden;font-size:11.5px;color:#606266">0</div>
<div class="a" style="left:409.0px;top:317.1px;width:67.0px;height:23.0px;border:1px solid #d3e1f3;border-radius:3px;background:#fff"></div>
<div class="t" style="left:423.0px;top:318.9px;width:49.0px;overflow:hidden;font-size:11.5px;color:#606266">0</div>
<div class="t" style="left:493.5px;top:318.9px;font-size:13px;color:#303133">50</div>
<div class="a" style="left:577.5px;top:317.1px;width:66.9px;height:23.0px;border:1px solid #e4e7ed;border-radius:3px;background:#f5f7fa"></div>
<div class="t" style="left:590.9px;top:318.9px;width:41.5px;overflow:hidden;font-size:11.5px;color:#c0c4cc">0.21083187</div>
<div class="a" style="left:662.5px;top:317.1px;width:83.1px;height:23.0px;border:1px solid #d3e1f3;border-radius:3px;background:#fff"></div>
<div class="t" style="left:675.0px;top:318.9px;width:66.6px;overflow:hidden;font-size:11.5px;color:#606266">10.54</div>
<div class="t" style="right:164.5px;top:318.9px;font-size:13px;color:#303133">0.2922</div>
<div class="a" style="left:21.0px;top:405.0px;width:877.0px;height:14.0px;background:#e8f1fd"></div>
<div class="a" style="left:873.0px;top:223.0px;width:85.0px;height:181.7px;background:#fff;box-shadow:-6px 0 6px -4px rgba(0,0,0,0.06)"></div>
<div class="a" style="left:873.0px;top:223.0px;width:85.0px;height:30.5px;background:#e8f1fd"></div>
<div class="a" style="left:873.0px;top:253.0px;width:85.0px;height:1.0px;background:#dbe7f6"></div>
<div class="a" style="left:873.0px;top:283.2px;width:85.0px;height:1.0px;background:#dbe7f6"></div>
<div class="a" style="left:873.0px;top:312.9px;width:85.0px;height:1.0px;background:#dbe7f6"></div>
<div class="a" style="left:873.0px;top:343.7px;width:85.0px;height:1.0px;background:#dbe7f6"></div>
<div class="t" style="left:903.5px;top:228.9px;font-weight:bold;color:#303133">操作</div>
<div class="t" style="left:903.5px;top:258.5px;color:#f56c6c">删除</div>
<div class="t" style="left:903.5px;top:288.3px;color:#f56c6c">删除</div>
<div class="t" style="left:903.5px;top:318.9px;color:#f56c6c">删除</div>
<div class="a" style="left:20.3px;top:430.0px;width:2.9px;height:11.0px;background:#3d8bf2"></div>
<div class="t" style="left:29.5px;top:425.8px;font-size:13.44px;color:#303133">退补汇总</div>
<div class="a" style="left:20.0px;top:452.0px;width:939.0px;height:31.5px;border:1px solid #dbe7f6;background:#fff"></div>
<div class="a" style="left:21.0px;top:453.0px;width:117.5px;height:29.5px;background:#e8f1fd"></div>
<div class="a" style="left:138.5px;top:453.0px;width:1.0px;height:29.5px;background:#dbe7f6"></div>
<div class="a" style="left:489.0px;top:453.0px;width:118.5px;height:29.5px;background:#e8f1fd"></div>
<div class="a" style="left:488.5px;top:453.0px;width:1.0px;height:29.5px;background:#dbe7f6"></div>
<div class="a" style="left:607.0px;top:453.0px;width:1.0px;height:29.5px;background:#dbe7f6"></div>
<div class="t" style="right:862.5px;top:458.1px;font-weight:bold;color:#606266">总电费</div>
<div class="t" style="left:146.0px;top:458.1px;font-size:13px;color:#606266">120.93</div>
<div class="t" style="right:393.2px;top:458.1px;font-weight:bold;color:#606266">总电量</div>
<div class="t" style="left:614.0px;top:458.1px;font-size:13px;color:#606266">260</div>
<div class="a" style="left:20.0px;top:493.5px;width:939.0px;height:1.5px;background:#d6e4f6"></div>
<div class="a" style="left:436px;top:505.5px;width:50.5px;height:23.5px;border:1px solid #d5e3f5;border-radius:3px;background:#fff;text-align:center;line-height:20px;font-size:11.76px;color:#303133">取消</div>
<div class="a" style="left:495px;top:505.5px;width:49px;height:23.5px;border-radius:3px;background:#3b8ff6;text-align:center;line-height:21.5px;font-size:11.76px;color:#fff">保存</div>
<div class="a" style="left:980.3px;top:164.3px;width:13.2px;height:374.7px;background:#e8f1fd"></div>
</div>

<!-- ============ ABOVE OVERLAY ============ -->
<div class="a" style="left:1497.3px;top:715.4px;width:80.7px;height:31.6px;border-radius:3px;background:#1c4f8f"></div>
<div class="t" style="left:1514px;top:721px;color:#b9c5d6">退补方案</div>
<div class="a" style="left:1528px;top:780.5px;width:48.5px;height:23px;border-radius:3px;background:#1c4f8f"></div>
<div class="t" style="left:1540px;top:782px;color:#b9c5d6">发送</div>
<div class="t" style="left:1373.5px;top:735px;height:22px;line-height:22px;font-size:18px;color:rgba(255,255,255,0.33)">激活 Windows</div>
<div class="t" style="left:1373.5px;top:756px;font-size:12.6px;color:rgba(255,255,255,0.33)">转到“设置”以激活 Windows。</div>
<svg style="left:1603.5px;top:725.5px" width="14" height="14" viewBox="0 0 14 14"><rect x="0" y="0" width="5.5" height="5.5" rx="1" fill="#3d8ef5"/><rect x="7.5" y="0" width="5.5" height="5.5" rx="1" fill="#3d8ef5"/><rect x="0" y="8" width="5.5" height="5.5" rx="1" fill="#3d8ef5"/><rect x="7.5" y="8" width="5.5" height="5.5" rx="1" fill="#3d8ef5"/></svg>
</body></html>
